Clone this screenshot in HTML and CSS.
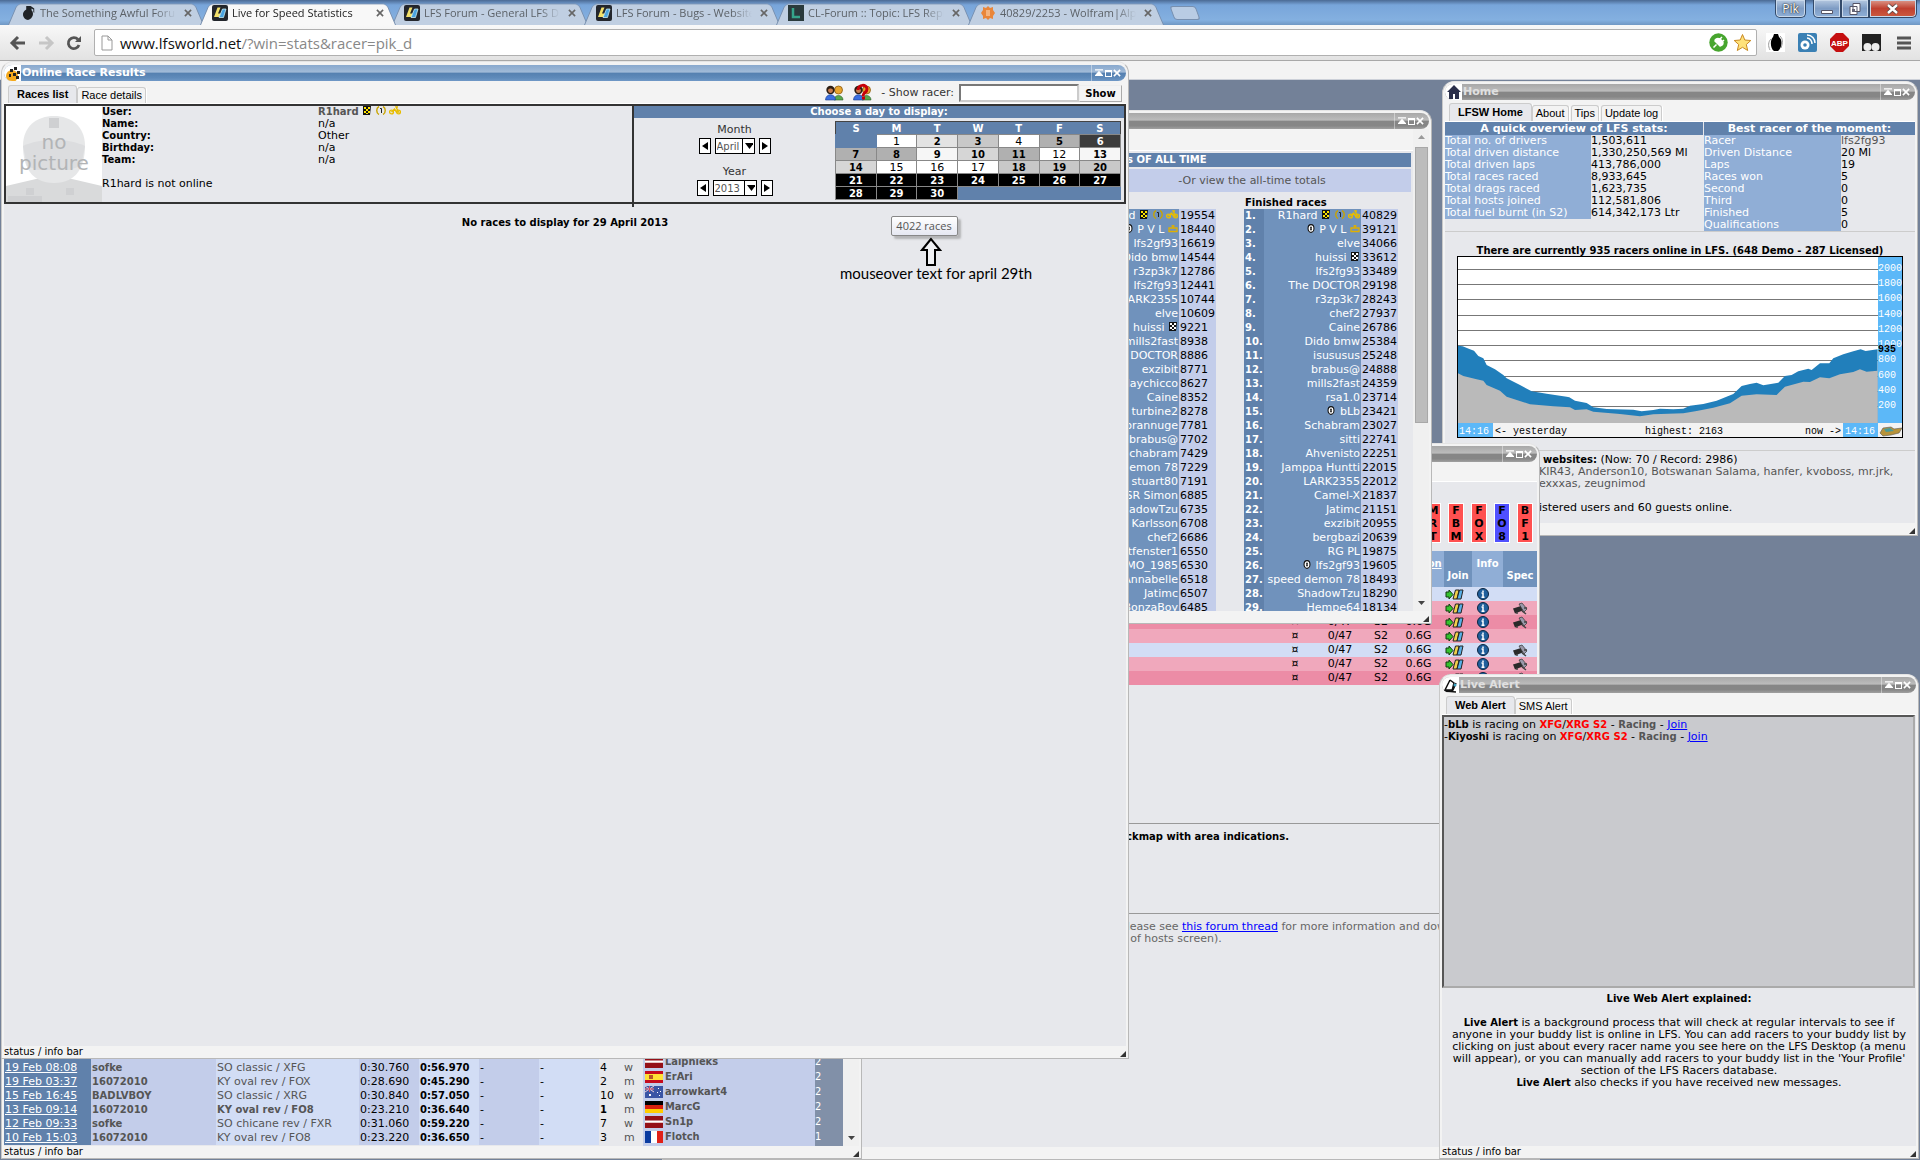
FILE: index.html
```html
<!DOCTYPE html>
<html lang="en">
<head>
<meta charset="utf-8">
<title>Live for Speed Statistics</title>
<link rel="stylesheet" href="styles.css">
</head>
<body>
<svg class="defs" aria-hidden="true">
  <symbol id="lfs" viewBox="0 0 16 16"><rect width="16" height="16" rx="2" fill="#23262c"/><path d="M5.500 2.500h3l-2.500 6h2.500L7.500 12H2z" fill="#f3e06a"/><path d="M10.500 4h3.500l-2.500 8.500H7z" fill="#4aa3e0" stroke="#dff" stroke-width=".7"/></symbol>
  <symbol id="nade" viewBox="0 0 16 18"><path d="M6 5V1h5l4 3v5l-1-1V5l-2-1v2c3 3 2 9-4 11C2 16 0 8 6 5z" fill="#1f2328"/></symbol>
  <symbol id="x" viewBox="0 0 9 9"><path d="M1 1l7 7M8 1L1 8" stroke="currentColor" stroke-width="1.800"/></symbol>
  <symbol id="flag" viewBox="0 0 10 9"><path d="M1 0h8l-1 9H1z" fill="#111"/><path d="M2 1h2v2H2zM6 1h2v2H6zM4 3h2v2H4zM2 5h2v2H2zM6 5h2v2H6zM4 7h2v1H4z" fill="currentColor"/></symbol>
  <symbol id="medal" viewBox="0 0 10 9"><path d="M3 .5C0 2 0 7 3 8.500M7 .5c3 1.500 3 6.500 0 8" fill="none" stroke="#c9a400" stroke-width="1.400"/><path d="M4 2.500h1.500V7" fill="none" stroke="#222"/></symbol>
  <symbol id="bike" viewBox="0 0 12 9"><g fill="none" stroke="#e8bd00" stroke-width="1.400"><circle cx="2.500" cy="6" r="1.900"/><circle cx="9.500" cy="6" r="1.900"/><path d="M2.500 6l3-3 2 3h2L7 1h2"/></g></symbol>
  <symbol id="crown" viewBox="0 0 10 9"><path d="M1 4h8v3.500H1zM5 4V1M3.500 2h3" fill="none" stroke="#e0b000" stroke-width="1.300"/></symbol>
  <symbol id="wheel" viewBox="0 0 8 10"><ellipse cx="4" cy="5" rx="3.300" ry="4.300" fill="#fff" stroke="#111" stroke-width="1.200"/><path d="M4 3v4" stroke="#111" stroke-width="2"/><path d="M4 4v2" stroke="#fff" stroke-width=".6"/></symbol>
  <symbol id="join" viewBox="0 0 19 11"><path d="M1 3h3V1l4 4.500L4 10V8H1z" fill="#35c22d" stroke="#123a10"/><path d="M10.500 1h3.500l-2 9H8z" fill="#f0d04a" stroke="#222"/><path d="M14.500 1h3.500l-2 9h-4z" fill="#58b0e8" stroke="#222"/></symbol>
  <symbol id="info" viewBox="0 0 12 12"><circle cx="6" cy="6" r="5.500" fill="#1f5f9c" stroke="#0a2540"/><path d="M6 2.500v1.500M4.500 5H6v4M4.500 9.300h3" stroke="#fff" stroke-width="1.500" fill="none"/></symbol>
  <symbol id="cam" viewBox="0 0 16 13"><path d="M1 6.500L9 4l3 4-9 3.500z" fill="#2a2a2a"/><path d="M7 2l3-1 5 6-3 3-2-3z" fill="#99a" stroke="#333" stroke-width=".7"/><path d="M5 10v2M10 9l4 3M12 6h3" stroke="#444" stroke-width="1.500"/></symbol>
  <symbol id="people" viewBox="0 0 19 16"><circle cx="13.500" cy="5" r="4" fill="#e9a52d" stroke="#8a5a10" stroke-width=".8"/><path d="M9 15c0-6 9-6 9 0z" fill="#58a84c" stroke="#2d5f26" stroke-width=".6"/><circle cx="5.500" cy="5" r="4.200" fill="#2c1d12"/><path d="M3 5c1-2 4-2 5 0 0 4-5 4-5 0z" fill="#c87b4c"/><path d="M.5 15c0-7 10-7 10 0z" fill="#3a6fe0" stroke="#173a8c" stroke-width=".6"/></symbol>
  <symbol id="ctl" viewBox="0 0 9 9"><path d="M0 1h9M1 7l3.500-4L8 7z" stroke="#fff" stroke-width="1.500" fill="#fff"/></symbol>
  <symbol id="lv" viewBox="0 0 18 16"><path d="M0 0h18v16H0z" fill="#941018"/><path d="M0 6h18v3H0z" fill="#fff"/></symbol>
</svg>

<header class="browser">
  <div class="tabstrip">
    <div class="tab"><svg class="fav"><use href="#nade"/></svg><span>The Something Awful Forums</span><svg class="tx"><use href="#x"/></svg></div>
    <div class="tab on"><svg class="fav"><use href="#lfs"/></svg><span>Live for Speed Statistics</span><svg class="tx"><use href="#x"/></svg></div>
    <div class="tab"><svg class="fav"><use href="#lfs"/></svg><span>LFS Forum - General LFS Dis</span><svg class="tx"><use href="#x"/></svg></div>
    <div class="tab"><svg class="fav"><use href="#lfs"/></svg><span>LFS Forum - Bugs - Website</span><svg class="tx"><use href="#x"/></svg></div>
    <div class="tab"><svg class="fav" viewBox="0 0 16 16"><path d="M0 0h16v16H0z" fill="#2a3a3c"/><path d="M5 3v9h7" fill="none" stroke="#35a58a" stroke-width="2.500"/></svg><span>CL-Forum :: Topic: LFS Repl</span><svg class="tx"><use href="#x"/></svg></div>
    <div class="tab"><svg class="fav" viewBox="0 0 16 16"><path d="M8 1l2 2 3-1v3l2 3-2 3v3l-3-1-2 2-2-2-3 1v-3L1 8l2-3V2l3 1z" fill="#e9863a"/><path d="M6 6h4M6 8h4M6 10h4" stroke="#ffe2c4"/></svg><span>40829/2253 - Wolfram|Alph</span><svg class="tx"><use href="#x"/></svg></div>
    <div class="newtab"></div>
    <div class="sys">
      <button class="user">Pik</button>
      <div class="wctl">
        <button aria-label="Minimize"><svg width="14" height="14"><path d="M1.500 8.500h11v3h-11z" fill="#fff" stroke="#556"/></svg></button>
        <button aria-label="Restore"><svg width="14" height="14"><path d="M5 1.500h7v8H5zM2 4.500h7v8H2z" fill="#fff" stroke="#556"/><path d="M4 7h3v3H4z" fill="#667"/></svg></button>
        <button class="quit" aria-label="Close"><svg width="14" height="14"><path d="M2 3l9 8M11 3l-9 8" stroke="#544" stroke-width="4"/><path d="M2 3l9 8M11 3l-9 8" stroke="#fff" stroke-width="2.400"/></svg></button>
      </div>
    </div>
  </div>
  <div class="bar">
    <button class="nav" aria-label="Back"><svg width="18" height="16"><path d="M9 2L3 8l6 6M3 8h13" fill="none" stroke="#555" stroke-width="3"/></svg></button>
    <button class="nav" aria-label="Forward"><svg width="18" height="16"><path d="M9 2l6 6-6 6M15 8H2" fill="none" stroke="#c6c6c6" stroke-width="3"/></svg></button>
    <button class="nav" aria-label="Reload"><svg width="18" height="16"><path d="M13 4.500A5.500 5.500 0 1 0 14 10" fill="none" stroke="#555" stroke-width="2.800"/><path d="M16 1v6h-6z" fill="#555"/></svg></button>
    <div class="omni">
      <svg width="12" height="16"><path d="M1 1h6l4 4v10H1zM7 1v4h4" fill="#fff" stroke="#999"/></svg>
      <a class="url" href="#"><b>www.lfsworld.net</b>/?win=stats&amp;racer=pik_d</a>
      <svg width="19" height="19" viewBox="0 0 19 19"><circle cx="9.500" cy="9.500" r="9.200" fill="#47a52e"/><path d="M6 8l5 5c3-1 4-3 2-5L11 6C8 5 6 6 6 8zM4.500 14.500l3-3M11 6l2-2M13 9l2-2" fill="#fff" stroke="#fff" stroke-width="1.500"/></svg>
      <svg width="19" height="19" viewBox="0 0 19 19"><path d="M9.500 1.500l2.300 5.500 6 .5-4.500 4 1.400 6-5.200-3.200L4.300 17.500l1.400-6-4.500-4 6-.5z" fill="#ffe27a" stroke="#c98a22"/></svg>
    </div>
    <svg class="ext" viewBox="0 0 19 19"><path d="M0 0h19v19H0z" fill="#fff"/><path d="M7 4l1-3h4l1 3c4 3 3 11-1 14H8C4 15 4 7 7 4z" fill="#000"/><path d="M5 6c-3 3-3 7-1 11M14 3c3 3 3 6 1 12" fill="none" stroke="#999"/></svg>
    <svg class="ext" viewBox="0 0 19 19"><rect width="19" height="19" rx="2" fill="#3a80b4"/><circle cx="7" cy="12" r="4.500" fill="#fff"/><circle cx="7" cy="12" r="1.800" fill="#3a80b4"/><path d="M9 5c3 0 5 3 5 6M9 2c5 0 8 4 8 8" fill="none" stroke="#fff" stroke-width="1.500"/></svg>
    <svg class="ext" viewBox="0 0 19 19"><path d="M6 0h7l6 6v7l-6 6H6l-6-6V6z" fill="#c50f10"/><text x="9.500" y="13" text-anchor="middle" class="abp">ABP</text></svg>
    <svg class="ext" viewBox="0 0 19 19"><path d="M0 1h19v17H0z" fill="#222"/><circle cx="5.500" cy="14" r="4" fill="#eee"/><circle cx="13.500" cy="14" r="4" fill="#eee"/></svg>
    <button class="nav menu" aria-label="Menu"><svg width="14" height="14"><path d="M0 2h14M0 7h14M0 12h14" stroke="#555" stroke-width="3"/></svg></button>
  </div>
</header>

<main class="desktop">
  <div class="sitebar"></div>

  <section class="win home">
    <div class="title"><span class="ticon"><svg width="14" height="14"><path d="M7 0l7 7h-2v7H8V9H6v5H2V7H0z" fill="#2a2f4a"/></svg></span><h2>Home</h2><div class="ctl"><button aria-label="Roll up"><svg><use href="#ctl"/></svg></button><button aria-label="Maximize"><i></i></button><button aria-label="Close"><svg><use href="#x"/></svg></button></div></div>
    <nav class="tabs"><a class="on" href="#">LFSW Home</a><a href="#">About</a><a href="#">Tips</a><a href="#">Update log</a></nav>
    <div class="body">
      <div class="overview">
        <table><colgroup><col class="c146"><col></colgroup><thead><tr><th colspan="2">A quick overview of LFS stats:</th></tr></thead><tbody>
          <tr><th>Total no. of drivers</th><td>1,503,611</td></tr>
          <tr><th>Total driven distance</th><td>1,330,250,569 Ml</td></tr>
          <tr><th>Total driven laps</th><td>413,786,000</td></tr>
          <tr><th>Total races raced</th><td>8,933,645</td></tr>
          <tr><th>Total drags raced</th><td>1,623,735</td></tr>
          <tr><th>Total hosts joined</th><td>112,581,806</td></tr>
          <tr><th>Total fuel burnt (in S2)</th><td>614,342,173 Ltr</td></tr></tbody></table>
        <table><colgroup><col class="c137"><col></colgroup><thead><tr><th colspan="2">Best racer of the moment:</th></tr></thead><tbody>
          <tr><th>Racer</th><td class="dim">lfs2fg93</td></tr>
          <tr><th>Driven Distance</th><td>20 Ml</td></tr>
          <tr><th>Laps</th><td>19</td></tr>
          <tr><th>Races won</th><td>5</td></tr>
          <tr><th>Second</th><td>0</td></tr>
          <tr><th>Third</th><td>0</td></tr>
          <tr><th>Finished</th><td>5</td></tr>
          <tr><th>Qualifications</th><td>0</td></tr></tbody></table>
      </div>
      <p class="now"><b>There are currently 935 racers online in LFS. (648 Demo - 287 Licensed)</b></p>
      <svg class="chart" viewBox="0 0 446 182">
        <path d="M0 0h446v182H0z" fill="#000"/><path d="M1 1h420v166H1z" fill="#fff"/><path d="M421 1h24v166h-24z" fill="#5cb8f8"/>
        <path d="M1 13.500h420M1 28.500h420M1 43.500h420M1 59.500h420M1 74.500h420M1 89.500h420M1 104.500h420M1 120.500h420M1 135.500h420M1 150.500h420" stroke="#777"/>
        <g transform="translate(-37 -36) scale(.3333)">
          <path fill="#217fbb" d="M114 377l14 2 22 9 12 4 13 16 15 7 10 20 25 13 25 17 10 10 40 20 35 19 45 7 60 9 8 2 17 10 35 7 20 13 40 5 80 2 25 5 35-4 20-4 40 2 30-2 20-9 40-5 40-10 50-20 25-24 25-6 20-4 20 8 45-8 20-20 20-3 20-11 30-8 10 4 25-20 28 0 12-15 30-12 30-9 22-6 15 5 36-5v222H114z"/>
          <path fill="#bababa" d="M114 460l16 8 40 10 20 4 10 13 40 17 20 18 70 23 70 6 50 3 15 8 35-2 20 7 80 7 60 7 40-6 90-3 40-7 50-10 50-13 35-23 45-4 60 2 25-25 55-15 20 1 30-14 28 3 32-12 40-7 20-8 20 7 33-3v158H114z"/>
        </g>
        <path d="M1 167h444v14H1z" fill="#f3f3f3"/><path d="M1 167h35v14H1zM386 167h35v14h-35z" fill="#5cb8f8"/>
        <path d="M423 177l3-5 8-1 3 2 8-1-3 5-8 2-8 1z" fill="#b8933a" stroke="#555" stroke-width=".6"/><path d="M427 173l6-1 4 3-8 1z" fill="#4a9a98"/>
        <g fill="#fff"><text x="421" y="15">2000</text><text x="421" y="30">1800</text><text x="421" y="45">1600</text><text x="421" y="61">1400</text><text x="421" y="76">1200</text><text x="421" y="91">1000</text><text x="421" y="106">800</text><text x="421" y="122">600</text><text x="421" y="137">400</text><text x="421" y="152">200</text><text x="2" y="178">14:16</text><text x="388" y="178">14:16</text></g>
        <text x="421" y="96" font-weight="bold">935</text><text x="38" y="178">&lt;- yesterday</text><text x="188" y="178">highest: 2163</text><text x="348" y="178">now -&gt;</text>
      </svg>
      <hr>
      <p class="online"><b>websites:</b> (Now: 70 / Record: 2986)<br><span>KIR43, Anderson10, Botswanan Salama, hanfer, kvoboss, mr.jrk,</span><br><span>exxxas, zeugnimod</span><br><br>istered users and 60 guests online.</p>
    </div>
    <footer class="status"></footer>
  </section>

  <section class="win hosts">
    <div class="title"><h2></h2><div class="ctl"><button aria-label="Roll up"><svg><use href="#ctl"/></svg></button><button aria-label="Maximize"><i></i></button><button aria-label="Close"><svg><use href="#x"/></svg></button></div></div>
    <div class="tabs"></div>
    <div class="body">
      <div class="cars"><span>M<br>R<br>T</span><span>F<br>B<br>M</span><span>F<br>O<br>X</span><span class="blue">F<br>O<br>8</span><span>B<br>F<br>1</span></div>
      <table class="hostlist">
        <colgroup><col><col class="c40"><col class="c50"><col class="c32"><col class="c47"><col class="c28"><col class="c31"><col class="c34"></colgroup>
        <thead><tr><th></th><th></th><th></th><th></th><th class="lite up"><a href="#">Version</a></th><th>Join</th><th class="lite up">Info</th><th>Spec</th></tr></thead>
        <tbody>
          <tr class="b"><td></td><td></td><td></td><td></td><td></td><td><svg class="j"><use href="#join"/></svg></td><td><svg class="i"><use href="#info"/></svg></td><td></td></tr>
          <tr class="p"><td></td><td></td><td></td><td></td><td></td><td><svg class="j"><use href="#join"/></svg></td><td><svg class="i"><use href="#info"/></svg></td><td><svg class="s"><use href="#cam"/></svg></td></tr>
          <tr class="r"><td></td><td>¤</td><td>0/47</td><td>S2</td><td>0.6G</td><td><svg class="j"><use href="#join"/></svg></td><td><svg class="i"><use href="#info"/></svg></td><td><svg class="s"><use href="#cam"/></svg></td></tr>
          <tr class="p"><td></td><td>¤</td><td>0/47</td><td>S2</td><td>0.6G</td><td><svg class="j"><use href="#join"/></svg></td><td><svg class="i"><use href="#info"/></svg></td><td></td></tr>
          <tr class="b"><td></td><td>¤</td><td>0/47</td><td>S2</td><td>0.6G</td><td><svg class="j"><use href="#join"/></svg></td><td><svg class="i"><use href="#info"/></svg></td><td><svg class="s"><use href="#cam"/></svg></td></tr>
          <tr class="p"><td></td><td>¤</td><td>0/47</td><td>S2</td><td>0.6G</td><td><svg class="j"><use href="#join"/></svg></td><td><svg class="i"><use href="#info"/></svg></td><td><svg class="s"><use href="#cam"/></svg></td></tr>
          <tr class="r"><td></td><td>¤</td><td>0/47</td><td>S2</td><td>0.6G</td><td><svg class="j"><use href="#join"/></svg></td><td><svg class="i"><use href="#info"/></svg></td><td><svg class="s"><use href="#cam"/></svg></td></tr>
        </tbody>
      </table>
      <div class="notes">
        <p class="map"><b>Trackmap with area indications.</b></p>
        <p class="more">Please see <a href="#">this forum thread</a> for more information and download<br>e of hosts screen).</p>
      </div>
    </div>
    <footer class="status"></footer>
  </section>

  <section class="win laps">
    <div class="title"><h2></h2></div>
    <div class="body row">
      <table class="pb">
        <colgroup><col class="c87"><col class="c125"><col class="c143"><col class="c60"><col class="c60"><col class="c60"><col class="c60"><col class="c24"><col class="c20"></colgroup>
        <tr><td><a href="#">19 Feb 08:08</a></td><td>sofke</td><td>SO classic / XFG</td><td>0:30.760</td><td>0:56.970</td><td>-</td><td>-</td><td>4</td><td>w</td></tr>
        <tr><td><a href="#">19 Feb 03:37</a></td><td>16072010</td><td>KY oval rev / FOX</td><td>0:28.690</td><td>0:45.290</td><td>-</td><td>-</td><td>2</td><td>m</td></tr>
        <tr><td><a href="#">15 Feb 16:45</a></td><td>BADLVBOY</td><td>SO classic / XRG</td><td>0:30.840</td><td>0:57.050</td><td>-</td><td>-</td><td>10</td><td>w</td></tr>
        <tr><td><a href="#">13 Feb 09:14</a></td><td>16072010</td><td><b>KY oval rev / FO8</b></td><td>0:23.210</td><td>0:36.640</td><td>-</td><td>-</td><td><b>1</b></td><td>m</td></tr>
        <tr><td><a href="#">12 Feb 09:33</a></td><td>sofke</td><td>SO chicane rev / FXR</td><td>0:31.060</td><td>0:59.220</td><td>-</td><td>-</td><td>7</td><td>w</td></tr>
        <tr><td><a href="#">10 Feb 15:03</a></td><td>16072010</td><td>KY oval rev / FO8</td><td>0:23.220</td><td>0:36.650</td><td>-</td><td>-</td><td>3</td><td>m</td></tr>
      </table>
      <table class="racers">
        <tr><td><svg viewBox="0 0 18 16" preserveAspectRatio="none"><use href="#lv"/></svg></td><td>Laipnieks</td><td>2</td></tr>
        <tr><td><svg viewBox="0 0 18 12" preserveAspectRatio="none"><path d="M0 0h18v12H0z" fill="#c60b1e"/><path d="M0 3h18v6H0z" fill="#ffe135"/><path d="M4 4h4v4H4z" fill="#b5562a"/></svg></td><td>ErAri</td><td>2</td></tr>
        <tr><td><svg viewBox="0 0 18 12" preserveAspectRatio="none"><path d="M0 0h18v12H0z" fill="#3a55a5"/><path d="M0 0l9 6M9 0L0 6M4.500 0v6M0 3h9" stroke="#f0d0d8"/><path d="M4.500 0v6M0 3h9" stroke="#c8203a" stroke-width=".7"/><path d="M4 8h2v2H4zM13 2h1v1h-1zM12 6h1v1h-1zM15 5h1v1h-1zM14 9h1v1h-1z" fill="#fff"/></svg></td><td>arrowkart4</td><td>2</td></tr>
        <tr><td><svg viewBox="0 0 18 12" preserveAspectRatio="none"><path d="M0 0h18v4H0z"/><path d="M0 4h18v4H0z" fill="#d8200e"/><path d="M0 8h18v4H0z" fill="#fc0"/></svg></td><td>MarcG</td><td>2</td></tr>
        <tr><td><svg viewBox="0 0 18 16" preserveAspectRatio="none"><use href="#lv"/></svg></td><td>Sn1p</td><td>2</td></tr>
        <tr><td><svg viewBox="0 0 18 12" preserveAspectRatio="none"><path d="M0 0h6v12H0z" fill="#0a3ba0"/><path d="M6 0h6v12H6z" fill="#fff"/><path d="M12 0h6v12h-6z" fill="#e02018"/></svg></td><td>Flotch</td><td>1</td></tr>
      </table>
      <div class="vscroll bottom"><svg width="7" height="4"><path d="M0 0h7L3.500 4z" fill="#444"/></svg></div>
    </div>
    <footer class="status">status / info bar</footer>
  </section>

  <section class="win stats">
    <div class="title"><h2></h2><div class="ctl"><button aria-label="Roll up"><svg><use href="#ctl"/></svg></button><button aria-label="Maximize"><i></i></button><button aria-label="Close"><svg><use href="#x"/></svg></button></div></div>
    <div class="row fill">
      <div class="view">
        <div class="viewtop"></div>
        <div class="alltime">s OF ALL TIME</div>
        <div class="totals">-Or view the all-time totals</div>
        <div class="ranks">
          <table class="won"><thead><tr><th colspan="2">&nbsp;</th></tr></thead><tbody>
            <tr><td>R1hard <svg class="y"><use href="#flag"/></svg> <svg><use href="#medal"/></svg> <svg class="w"><use href="#bike"/></svg></td><td>19554</td></tr>
            <tr><td><svg><use href="#wheel"/></svg> P V L <svg><use href="#crown"/></svg></td><td>18440</td></tr>
            <tr><td>lfs2gf93</td><td>16619</td></tr><tr><td>Dido bmw</td><td>14544</td></tr><tr><td>r3zp3k7</td><td>12786</td></tr><tr><td>lfs2fg93</td><td>12441</td></tr><tr><td>LARK2355</td><td>10744</td></tr><tr><td>elve</td><td>10609</td></tr>
            <tr><td>huissi <svg><use href="#flag"/></svg></td><td>9221</td></tr>
            <tr><td>mills2fast</td><td>8938</td></tr><tr><td>DOCTOR</td><td>8886</td></tr><tr><td>exzibit</td><td>8771</td></tr><tr><td>Playchicco</td><td>8627</td></tr><tr><td>Caine</td><td>8352</td></tr><tr><td>turbine2</td><td>8278</td></tr><tr><td>brannuge</td><td>7781</td></tr><tr><td>brabus@</td><td>7702</td></tr><tr><td>Schabram</td><td>7429</td></tr><tr><td>demon 78</td><td>7229</td></tr><tr><td>stuart80</td><td>7191</td></tr><tr><td>SR Simon</td><td>6885</td></tr><tr><td>ShadowTzu</td><td>6735</td></tr><tr><td>Karlsson</td><td>6708</td></tr><tr><td>chef2</td><td>6686</td></tr><tr><td>tfenster1</td><td>6550</td></tr><tr><td>MO_1985</td><td>6530</td></tr><tr><td>Annabelle</td><td>6518</td></tr><tr><td>Jatimc</td><td>6507</td></tr><tr><td>BonzaBoy</td><td>6485</td></tr>
          </tbody></table>
          <table class="fin"><thead><tr><th colspan="3">Finished races</th></tr></thead><tbody>
            <tr><th>1.</th><td>R1hard <svg class="y"><use href="#flag"/></svg> <svg><use href="#medal"/></svg> <svg class="w"><use href="#bike"/></svg></td><td>40829</td></tr>
            <tr><th>2.</th><td><svg><use href="#wheel"/></svg> P V L <svg><use href="#crown"/></svg></td><td>39121</td></tr>
            <tr><th>3.</th><td>elve</td><td>34066</td></tr>
            <tr><th>4.</th><td>huissi <svg><use href="#flag"/></svg></td><td>33612</td></tr>
            <tr><th>5.</th><td>lfs2fg93</td><td>33489</td></tr><tr><th>6.</th><td>The DOCTOR</td><td>29198</td></tr><tr><th>7.</th><td>r3zp3k7</td><td>28243</td></tr><tr><th>8.</th><td>chef2</td><td>27937</td></tr><tr><th>9.</th><td>Caine</td><td>26786</td></tr><tr><th>10.</th><td>Dido bmw</td><td>25384</td></tr><tr><th>11.</th><td>isususus</td><td>25248</td></tr><tr><th>12.</th><td>brabus@</td><td>24888</td></tr><tr><th>13.</th><td>mills2fast</td><td>24359</td></tr><tr><th>14.</th><td>rsa1.0</td><td>23714</td></tr>
            <tr><th>15.</th><td><svg><use href="#wheel"/></svg> bLb</td><td>23421</td></tr>
            <tr><th>16.</th><td>Schabram</td><td>23027</td></tr><tr><th>17.</th><td>sitti</td><td>22741</td></tr><tr><th>18.</th><td>Ahvenisto</td><td>22251</td></tr><tr><th>19.</th><td>Jamppa Huntti</td><td>22015</td></tr><tr><th>20.</th><td>LARK2355</td><td>22012</td></tr><tr><th>21.</th><td>Camel-X</td><td>21837</td></tr><tr><th>22.</th><td>Jatimc</td><td>21151</td></tr><tr><th>23.</th><td>exzibit</td><td>20955</td></tr><tr><th>24.</th><td>bergbazi</td><td>20639</td></tr><tr><th>25.</th><td>RG PL</td><td>19875</td></tr>
            <tr><th>26.</th><td><svg><use href="#wheel"/></svg> lfs2gf93</td><td>19605</td></tr>
            <tr><th>27.</th><td>speed demon 78</td><td>18493</td></tr><tr><th>28.</th><td>ShadowTzu</td><td>18290</td></tr><tr><th>29.</th><td>Hempe64</td><td>18134</td></tr>
          </tbody></table>
        </div>
      </div>
      <div class="vscroll"><svg width="7" height="4"><path d="M0 4h7L3.500 0z" fill="#999"/></svg><i class="thumb"></i><svg width="7" height="4"><path d="M0 0h7L3.500 4z" fill="#444"/></svg></div>
    </div>
    <footer class="status"></footer>
  </section>

  <section class="win alert">
    <div class="title"><span class="ticon"><svg width="16" height="15"><path d="M7 2L2 12h8L13 5M7 2l4 3-2 8M1 13l12 1" fill="none" stroke="#111" stroke-width="1.500"/><circle cx="12" cy="7" r="1.500" fill="#3aa0c0"/></svg></span><h2>Live Alert</h2><div class="ctl"><button aria-label="Roll up"><svg><use href="#ctl"/></svg></button><button aria-label="Maximize"><i></i></button><button aria-label="Close"><svg><use href="#x"/></svg></button></div></div>
    <nav class="tabs"><a class="on" href="#">Web Alert</a><a href="#">SMS Alert</a></nav>
    <div class="body">
      <div class="feed">
        <p>-<b>bLb</b> is racing on <b class="red">XFG</b>/<b class="red">XRG S2</b> - <b class="dim">Racing</b> - <a href="#">Join</a></p>
        <p>-<b>Kiyoshi</b> is racing on <b class="red">XFG</b>/<b class="red">XRG S2</b> - <b class="dim">Racing</b> - <a href="#">Join</a></p>
      </div>
      <div class="explain">
        <b>Live Web Alert explained:</b><br><br>
        <b>Live Alert</b> is a background process that will check at regular intervals to see if<br>anyone in your buddy list is online in LFS. You can add racers to your buddy list by<br>clicking on just about every racer name you see here on the LFS Desktop (a menu<br>will appear), or you can manually add racers to your buddy list in the 'Your Profile'<br>section of the LFS Racers database.<br>
        <b>Live Alert</b> also checks if you have received new messages.
      </div>
    </div>
    <footer class="status">status / info bar</footer>
  </section>

  <section class="win results">
    <div class="title blue"><span class="ticon"><svg width="16" height="15"><circle cx="7" cy="10" r="6" fill="#f5a91c"/><path d="M5 3h3v3H5zM9 1h3v3H9zM12 5h3v3h-3zM8 7h3v3H8zM4 8h2v3H4zM11 10h3v3h-3z" fill="#222"/></svg></span><h2>Online Race Results</h2><div class="ctl"><button aria-label="Roll up"><svg><use href="#ctl"/></svg></button><button aria-label="Maximize"><i></i></button><button aria-label="Close"><svg><use href="#x"/></svg></button></div></div>
    <nav class="tabs"><a class="on" href="#">Races list</a><a href="#">Race details</a>
      <form class="find"><svg width="19" height="16"><use href="#people"/></svg><svg width="19" height="16"><use href="#people"/><path d="M5 5c0-6 9-6 9-1 0 4-4 3-4 7M9 13h3" fill="none" stroke="#c80008" stroke-width="3"/></svg><label for="racer">- Show racer:</label><input id="racer" type="text"><button type="button">Show</button></form>
    </nav>
    <div class="body">
      <div class="panel">
        <svg class="nopic" viewBox="0 0 96 96"><path d="M0 0h96v96H0z" fill="#fff"/><path d="M0 80l30-7h36l30 7v16H0z" fill="#d9dadb"/><path d="M17 40c0-20 14-30 31-30s31 10 31 30c0 20-8 37-31 37S17 60 17 40z" fill="#e6e7e8"/><path d="M17 40c16-8 46-8 62 0l-4 20-12 4H31l-10-4z" fill="#dcdddf"/><path d="M43 12h10v10H43zM20 82h8v7h-8zM60 82h8v7h-8zM2 90h34v6H2z" fill="#cfd0d2"/><text x="48" y="43" text-anchor="middle">no</text><text x="48" y="64" text-anchor="middle">picture</text></svg>
        <dl>
          <dt>User:</dt><dd><b class="dim">R1hard</b> <svg class="y"><use href="#flag"/></svg> <svg><use href="#medal"/></svg> <svg class="w"><use href="#bike"/></svg></dd>
          <dt>Name:</dt><dd>n/a</dd><dt>Country:</dt><dd>Other</dd><dt>Birthday:</dt><dd>n/a</dd><dt>Team:</dt><dd>n/a</dd>
          <dt class="line">R1hard is not online</dt>
        </dl>
        <div class="choose">
          <h3>Choose a day to display:</h3>
          <div class="row">
            <div class="pickers">
              <label for="month">Month</label>
              <div class="step"><button aria-label="Previous month"><svg width="6" height="8"><path d="M6 0v8L0 4z"/></svg></button><span class="pick"><select id="month"><option>April</option></select><svg width="9" height="6"><path d="M0 0h9L4.500 6z"/></svg></span><button aria-label="Next month"><svg width="6" height="8"><path d="M0 0v8l6-4z"/></svg></button></div>
              <label for="year">Year</label>
              <div class="step wide"><button aria-label="Previous year"><svg width="6" height="8"><path d="M6 0v8L0 4z"/></svg></button><span class="pick"><select id="year"><option>2013</option></select><svg width="9" height="6"><path d="M0 0h9L4.500 6z"/></svg></span><button aria-label="Next year"><svg width="6" height="8"><path d="M0 0v8l6-4z"/></svg></button></div>
            </div>
            <table class="cal">
              <tr><th>S</th><th>M</th><th>T</th><th>W</th><th>T</th><th>F</th><th>S</th></tr>
              <tr><td class="none"></td><td class="g0 thin">1</td><td class="g2">2</td><td class="g4">3</td><td class="g0 thin">4</td><td class="g5">5</td><td class="g8">6</td></tr>
              <tr><td class="g5">7</td><td class="g5">8</td><td class="g1">9</td><td class="g3">10</td><td class="g5">11</td><td class="g0 thin">12</td><td class="g1">13</td></tr>
              <tr><td class="g3">14</td><td class="g0 thin">15</td><td class="g0 thin">16</td><td class="g0 thin">17</td><td class="g4">18</td><td class="g4">19</td><td class="g4">20</td></tr>
              <tr><td class="g9">21</td><td class="g9">22</td><td class="g9">23</td><td class="g9">24</td><td class="g9">25</td><td class="g9">26</td><td class="g9">27</td></tr>
              <tr><td class="g9">28</td><td class="g9">29</td><td class="g9">30</td><td class="none" colspan="4"></td></tr>
            </table>
          </div>
        </div>
      </div>
      <p class="empty"><b>No races to display for 29 April 2013</b></p>
    </div>
    <footer class="status">status / info bar</footer>
  </section>

  <div class="callout"><div class="tip">4022 races</div><svg width="22" height="30"><path d="M11 2L2 13h5v15h8V13h5z" fill="#f0f1f4" stroke="#000" stroke-width="2"/></svg><p>mouseover text for april 29th</p></div>
</main>
</body>
</html>
```
FILE: styles.css
```css
* { box-sizing: border-box; }
body { margin: 0; height: 100vh; display: flex; flex-direction: column; font: 11px/12px "DejaVu Sans", Verdana, sans-serif; color: #000; }
b, strong { font-size: 10px; }
p, h2, h3, dl, dd { margin: 0; }
button { padding: 0; font: inherit; }
table { border-collapse: collapse; border-spacing: 0; }
td, th { padding: 0; font-weight: normal; text-align: left; }
svg { display: block; }
.defs { display: none; }
.row { display: flex; }
.dim { color: #555; }
.red { color: #f00; }
a { color: #00f; }

/* browser frame */
.browser { flex: none; }
.tabstrip { display: flex; height: 25px; padding-left: 8px; background: linear-gradient(#4b6a94, #78a5da 5px, #84b0e0 20px, #7098c4); }
.tab { position: relative; z-index: 0; display: flex; align-items: center; width: 192px; padding: 0 8px 0 12px; gap: 4px; height: 25px; color: #5c6268; font: 11px/16px "Open Sans", sans-serif; }
.tab::before { content: ""; position: absolute; z-index: -1; inset: 1px -4px 0 0; background: #c0cfe2; border: 1px solid #7890b0; border-bottom: 0; border-radius: 5px 5px 0 0; transform: perspective(40px) rotateX(10deg); transform-origin: bottom; }
.tab.on { z-index: 2; color: #222; }
.tab.on::before { background: #f8f8f8; }
.tab span { flex: 1; overflow: hidden; white-space: nowrap; margin-right: 4px; }
.tab:not(.on) span { mask-image: linear-gradient(90deg, #000 85%, transparent); }
.fav { width: 16px; height: 16px; flex: none; }
.tx { width: 8px; height: 8px; flex: none; color: #666; }
.newtab { width: 26px; height: 14px; margin: 6px 0 0 12px; border: 1px solid #7890b0; border-radius: 3px; background: #b9cce4; transform: skewX(20deg); }
.sys { display: flex; margin-left: auto; padding-right: 3px; gap: 7px; height: 18px; }
.sys button { display: grid; place-items: center; border: 1px solid #334a6a; border-top: 0; background: linear-gradient(#b5c8e0, #7e9cc4 50%, #8fb0d8); box-shadow: inset 0 0 0 1px #c8d8ea; color: #fff; }
.sys .user { width: 31px; border-radius: 0 0 5px 5px; font: 12px/14px "Open Sans", sans-serif; text-shadow: 0 0 2px #222, 0 0 1px #222; }
.wctl { display: flex; }
.wctl button { width: 28px; }
.wctl button:first-child { border-radius: 0 0 0 5px; }
.wctl .quit { width: 48px; border-radius: 0 0 5px 0; background: linear-gradient(#dc9a8c, #c04030 50%, #cc5a40); }
.bar { display: flex; align-items: center; height: 36px; padding: 0 9px 0 8px; background: linear-gradient(#f8f8f8, #e2e2e2); border-bottom: 1px solid #a8a8a8; }
.nav { border: 0; background: none; width: 20px; margin-right: 8px; display: grid; place-items: center; }
.nav.menu { width: 14px; margin: 0 0 0 3px; }
.omni { flex: 1; display: flex; align-items: center; gap: 5px; height: 27px; margin: 0 9px 0 2px; padding: 0 4px 0 6px; background: #fff; border: 1px solid #b0b0b0; border-radius: 2px; }
.url { flex: 1; padding-left: 2px; color: #888; text-decoration: none; font: 15px/24px "Open Sans", sans-serif; }
.url b { font-weight: normal; font-size: 15px; color: #111; }
.ext { width: 19px; height: 19px; margin-right: 13px; }
.abp { font: bold 8px "Liberation Sans", sans-serif; fill: #fff; }

/* desktop */
.desktop { flex: 1; min-height: 0; position: relative; overflow: hidden; background: #738198; }
.sitebar { height: 19px; background: #f3f3f3; border-bottom: 1px solid #ccd0d8; }

/* window */
.win { position: absolute; display: flex; flex-direction: column; padding: 2px 2px 0; background: #f3f3f3; border: 1px solid; border-color: #e4e4e4 #b8b8b8 #b8b8b8 #c8c8c8; border-radius: 12px 12px 0 0; }
.title { flex: none; display: flex; align-items: center; height: 16px; border-radius: 8px; background: linear-gradient(#a8a8a8, #bcbcbc 45%, #868686 50%, #868686 80%, #a0a0a0); overflow: hidden; }
.title.blue { background: linear-gradient(#88a9ce, #a2bbd8 45%, #5580b0 50%, #5f8aba 80%, #6f98c6); }
.title h2 { flex: 1; font: bold 11px/16px "DejaVu Sans", Verdana, sans-serif; color: #e0e0e0; padding-left: 1px; white-space: nowrap; }
.title.blue h2 { color: #fff; }
.ticon { width: 17px; height: 16px; display: grid; place-items: center; background: #fff; overflow: hidden; }
.ctl { display: flex; align-items: center; gap: 1px; height: 16px; padding: 0 5px 0 3px; border-left: 1px solid #ffffff66; }
.ctl button { width: 8px; height: 10px; border: 0; background: none; color: #fff; display: grid; place-items: center; }
.ctl svg { width: 8px; height: 8px; }
.ctl i { width: 7px; height: 7px; border: 1px solid #fff; border-top-width: 2px; }
.tabs { flex: none; display: flex; align-items: flex-end; gap: 2px; height: 22px; padding-left: 4px; border-bottom: 1px solid #fff; }
.tabs > a { height: 16px; padding: 0 3px; border: 1px solid #ccc; border-bottom: 0; border-radius: 3px 3px 0 0; font: 11px/14px "Liberation Sans", Arial, sans-serif; color: #000; text-decoration: none; box-shadow: 1px 0 #fff; white-space: nowrap; }
.tabs > a.on { height: 18px; padding: 0 8px; background: #e7e8ec; font-weight: bold; line-height: 16px; margin-right: -2px; }
.body { flex: 1; min-height: 0; background: #e7e8ec; overflow: hidden; }
.status { flex: none; position: relative; height: 12px; line-height: 12px; background: #f3f3f3; font-size: 10px; }
.status::after { content: ""; position: absolute; right: 0; bottom: 1px; border: 3px solid; border-color: transparent #333 #333 transparent; }
.vscroll { flex: none; width: 16px; background: #f0f0f0; display: flex; flex-direction: column; align-items: center; justify-content: space-between; padding: 6px 0; }
.vscroll.bottom { justify-content: flex-end; }
.vscroll .thumb { width: 13px; height: 276px; margin: 8px 0 auto; background: #bcbcbc; border: 1px solid #a8a8a8; }

/* online race results */
.results { left: 1px; top: 0; width: 1128px; height: 998px; padding-top: 3px; }
.results .tabs { height: 23px; }
.results .title h2 { padding-left: 1px; }
.find { flex: 1; display: flex; align-items: center; justify-content: flex-end; height: 18px; margin-bottom: 1px; padding-right: 4px; }
.find svg { margin-right: 9px; overflow: visible; }
.find label { padding: 0 5px 0 0; color: #333; }
.find input { width: 120px; height: 18px; border: 2px inset #ccc; background: #fff; }
.find button { width: 43px; height: 17px; border: 1px solid #aaa; border-top-color: #eee; border-left-color: #eee; background: #f4f4f4; font: bold 10px/15px "DejaVu Sans", sans-serif; }
.panel { display: grid; grid-template-columns: 96px 530px 1fr; height: 100px; border: 2px solid #333; }
.nopic { width: 96px; height: 96px; }
.nopic text { font: 20px "DejaVu Sans", sans-serif; fill: #b2b4b6; }
dl { display: grid; grid-template-columns: 216px 1fr; grid-auto-rows: 12px; }
dt { font-weight: bold; font-size: 10px; }
dt.line { grid-column: 1 / 3; padding-top: 12px; font-weight: normal; font-size: 11px; }
dd svg { display: inline-block; vertical-align: baseline; width: 10px; height: 9px; color: #fff; }
svg.y { color: #ffe400; }
dd svg.w { width: 12px; }
.choose { border-left: 2px solid #333; }
.choose h3 { height: 12px; background: #6081ab; color: #fff; font: bold 10px/12px "DejaVu Sans", sans-serif; text-align: center; }
.pickers { flex: 1; display: flex; flex-direction: column; align-items: center; padding-top: 5px; }
.pickers label { line-height: 14px; margin-bottom: 1px; color: #333; }
.step { display: flex; gap: 4px; height: 16px; margin-bottom: 11px; }
.step button { width: 12px; height: 16px; border: 1px solid #000; background: #fff; display: grid; place-items: center; }
.pick { position: relative; }
.pick select { appearance: none; display: block; width: 40px; height: 16px; padding: 0 1px; border: 1px solid #000; border-radius: 0; background: linear-gradient(90deg, transparent calc(100% - 12px), #000 0, #000 calc(100% - 11px), transparent 0) #fff; font: 10px/13px "DejaVu Sans", sans-serif; color: #555; }
.pick .wide select, .wide select { width: 44px; }
.pick svg { position: absolute; right: 2px; top: 5px; width: 8px; }
.cal { flex: none; align-self: flex-start; width: 286px; table-layout: fixed; margin: 3px 3px 0 0; background: #6081ab; border: 1px solid #444; }
.cal td, .cal th { height: 13px; padding: 0; text-align: center; font: bold 10px/11px "DejaVu Sans", sans-serif; }
.cal td { border: 1px solid #888; }
.cal th { color: #fff; }
.cal .thin { font-weight: normal; font-size: 11px; }
.cal .none { border-color: #6081ab; }
.g0 { background: #fff; }
.g1 { background: #f6f6f6; }
.g2 { background: #e3e3e3; }
.g3 { background: #d6d6d6; }
.g4 { background: #c8c8c8; }
.g5 { background: #b0b0b0; }
.g8 { background: #3c3c3c; color: #fff; }
.g9 { background: #000; color: #fff; }
.empty { padding-top: 13px; text-align: center; }
.callout { position: absolute; left: 841px; top: 155px; width: 190px; display: flex; flex-direction: column; align-items: center; }
.tip { width: 67px; height: 20px; margin-right: 24px; border: 1px solid #888; border-radius: 2px; background: linear-gradient(#fff, #e6e8f2); box-shadow: 3px 3px 2px #8888; text-align: center; font: 11px/17px "Open Sans", sans-serif; color: #555; }
.callout svg { margin: 1px 10px -2px 0; }
.callout p { font: 15px/16px Lato, sans-serif; white-space: nowrap; }

/* home */
.home { right: 2px; top: 20px; width: 476px; height: 455px; }
.overview { display: grid; grid-template-columns: 258px 1fr; gap: 1px; align-items: start; border-bottom: 1px solid #ccc; }
.overview table { width: 100%; table-layout: fixed; }
.overview thead th { height: 13px; background: #6081ab; color: #fff; font-weight: bold; text-align: center; line-height: 13px; }
.overview tbody th { background: #90aed6; color: #fff; white-space: nowrap; }
.overview tr { height: 12px; }
.now { padding-top: 13px; text-align: center; line-height: 11px; }
.chart { width: 446px; height: 182px; margin: 0 auto; }
.chart text { font-family: "Liberation Mono", monospace; font-size: 10px; }
hr { margin: 12px 0 3px; border: 0; border-top: 1px solid #ccc; }
.online { padding-left: 94px; white-space: nowrap; }
.online b { padding-left: 4px; }
.online span { color: #555; }

/* hosts */
.hosts { left: 662px; top: 382px; width: 878px; bottom: 0; }
.hosts .tabs { height: 20px; }
.cars { display: flex; justify-content: flex-end; gap: 7px; padding: 21px 4px 8px; }
.cars span { width: 16px; height: 40px; border: 1px solid #fff; background: #ff5050; text-align: center; font: bold 11px/13px "DejaVu Sans", sans-serif; }
.cars .blue { background: #5050ff; }
.hostlist { width: 100%; table-layout: fixed; }
.hostlist th { height: 36px; background: #7092bc; color: #fff; font-weight: bold; font-size: 10px; text-align: center; vertical-align: middle; padding-top: 13px; }
.hostlist th.lite { background: #90aed6; }
.hostlist th.up { padding: 0 0 10px; }
.hostlist th.up a { color: #fff; }
.hostlist td { height: 14px; text-align: center; }
.hostlist td:nth-child(5) { padding-right: 4px; }
.j { width: 19px; height: 11px; margin-left: 1px; }
.i { width: 12px; height: 12px; margin-left: 5px; }
.s { width: 16px; height: 13px; margin: 0 auto; }
.b { background: #d2ddf5; }
.p { background: #f0a8bc; }
.r { background: #ec8ca6; }
.c20 { width: 20px; }
.c24 { width: 24px; }
.c28 { width: 28px; }
.c31 { width: 31px; }
.c32 { width: 32px; }
.c34 { width: 34px; }
.c40 { width: 40px; }
.c47 { width: 47px; }
.c50 { width: 50px; }
.c60 { width: 60px; }
.c87 { width: 87px; }
.c125 { width: 125px; }
.c137 { width: 137px; }
.c143 { width: 143px; }
.c146 { width: 146px; }
.notes { margin-top: 138px; white-space: nowrap; }
.map { height: 90px; padding: 7px 248px 0 0; border-top: 1px solid #999; text-align: right; }
.more { padding: 7px 0 0 455px; border-top: 1px solid #999; color: #666; }

/* personal bests */
.laps { left: 1px; bottom: 1px; width: 861px; height: 122px; }
.pb { align-self: flex-end; table-layout: fixed; width: 639px; margin-bottom: 1px; }
.pb td { height: 14px; padding: 0 1px; background: #c3cdea; white-space: nowrap; }
.pb tr:first-child td { height: 17px; vertical-align: bottom; padding-bottom: 1px; }
.pb td:nth-child(1) { background: #6081ab; }
.pb td:nth-child(1) a { color: #fff; }
.pb td:nth-child(2) { font-weight: bold; font-size: 10px; color: #555; }
.pb td:nth-child(3) { background: #d2ddf5; color: #555; }
.pb td:nth-child(5) { font-weight: bold; font-size: 10px; background: #d2ddf5; }
.pb td:nth-child(7) { background: #d2ddf5; }
.pb td:nth-child(n+8) { background: #e7e8ec; }
.pb td:nth-child(9) { color: #555; }
.racers { flex: 1; }
.racers td { height: 15px; background: #c3cdea; vertical-align: top; font: bold 11px/12px "DejaVu Sans Condensed", Tahoma, sans-serif; color: #555; }
.racers td:first-child { width: 22px; padding-left: 2px; }
.racers td:last-child { width: 28px; background: #8190a8; color: #fff; font-weight: normal; }
.racers svg { width: 18px; height: 12px; }

/* all-time stats */
.stats { left: 1090px; top: 49px; width: 342px; height: 514px; }
.fill { flex: 1; min-height: 0; }
.view { flex: 1; overflow: hidden; background: #e7e8ec; }
.viewtop { height: 22px; background: #f3f3f3; border-bottom: 1px solid #fff; }
.alltime { margin: 2px 2px 2px 0; padding-left: 34px; height: 14px; background: #6081ab; color: #fff; font: bold 10px/14px "DejaVu Sans", sans-serif; }
.totals { height: 23px; margin-right: 2px; background: #c3cdea; color: #555; text-align: center; line-height: 23px; }
.ranks { display: grid; grid-template-columns: 123px 154px; gap: 28px; margin-top: 4px; }
.ranks thead th { height: 13px; font-weight: bold; font-size: 10px; padding-left: 1px; }
.ranks tbody th { width: 20px; padding-left: 1px; font-weight: bold; font-size: 10px; background: #6081ab; color: #fff; }
.ranks td { height: 14px; padding: 0 1px; background: #7092bc; color: #fff; text-align: right; white-space: nowrap; }
.ranks td:last-child { width: 37px; background: #c3cdea; color: #000; text-align: left; }
.ranks table { align-self: start; }
.ranks td svg { display: inline-block; width: 10px; height: 9px; vertical-align: baseline; }
.ranks td svg.w { width: 12px; }

/* live alert */
.alert { right: 1px; bottom: 1px; width: 480px; height: 485px; }
.feed { height: 273px; margin-right: 1px; padding: 2px 0; background: #c9cace; border: 2px inset #aaa; }
.explain { padding-top: 5px; text-align: center; white-space: nowrap; }
```
